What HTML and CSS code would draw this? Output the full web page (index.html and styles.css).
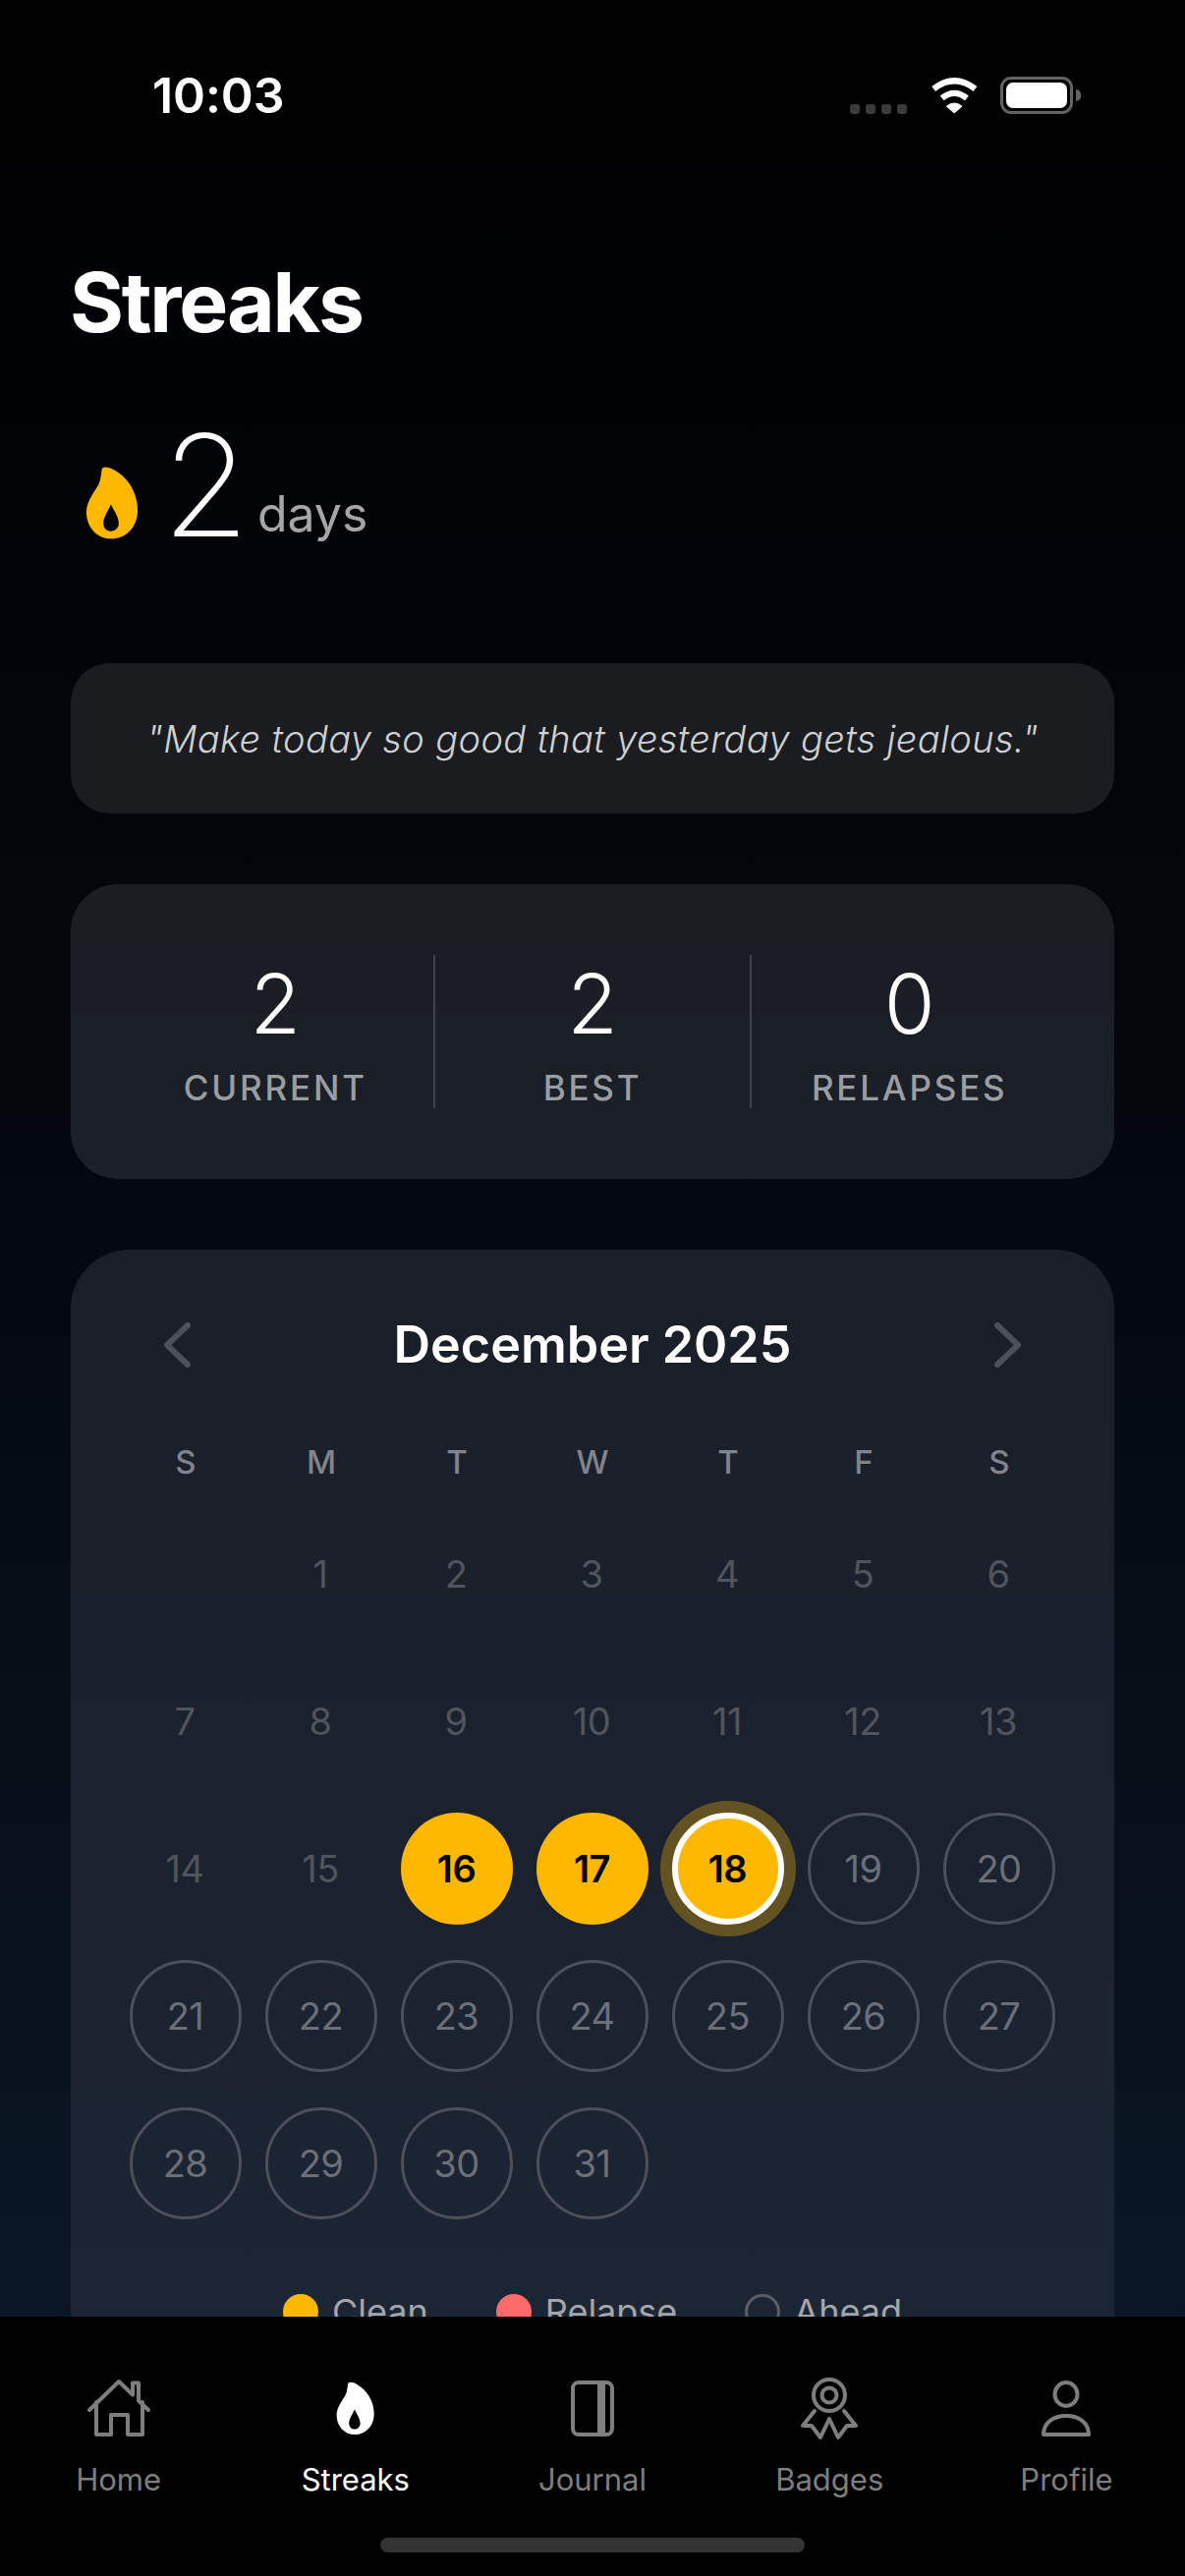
FILE: index.html
```html
<!DOCTYPE html>
<html lang="en">
<head>
<meta charset="utf-8">
<title>Streaks</title>
<link rel="stylesheet" href="styles.css">
</head>
<body>
<svg class="defs" width="0" height="0" aria-hidden="true">
  <symbol id="flame" viewBox="80 100 170 235">
    <path fill="currentColor" fill-rule="evenodd" d="M133 112 C140 104 155 108 170 116 C215 140 242 190 242 240 C242 292 205 327 162 327 C118 327 85 292 85 245 C85 215 105 190 120 165 C130 148 130 125 133 112 Z M160 222 C172 245 184 262 184 280 C184 294 173 304 160 304 C147 304 137 294 137 280 C137 262 150 245 160 222 Z"/>
  </symbol>
</svg>
<div class="screen">
  <header class="status">
    <span class="time">10:03</span>
    <span class="island"></span>
    <span class="signal"><i></i><i></i><i></i><i></i></span>
    <svg class="wifi" viewBox="312 84 160 116">
      <path class="wifi-arc" d="M327 122 Q391 72 456 122"/>
      <path class="wifi-arc" d="M353 151 Q391 120 430 151"/>
      <path class="wifi-dot" d="M391 197 L367 176 Q391 157 415 176 Z"/>
    </svg>
    <span class="battery"><span class="battery-fill"></span></span>
    <span class="battery-nub"></span>
  </header>

  <main class="content">
    <h1 class="title">Streaks</h1>
    <div class="hero">
      <svg class="hero-flame"><use href="#flame"/></svg>
      <span class="hero-num">2</span>
      <span class="hero-unit">days</span>
    </div>

    <section class="card quote">"Make today so good that yesterday gets jealous."</section>

    <section class="card stats">
      <div class="stat"><div class="stat-num">2</div><div class="stat-label">CURRENT</div></div>
      <div class="stat"><div class="stat-num">2</div><div class="stat-label">BEST</div></div>
      <div class="stat"><div class="stat-num">0</div><div class="stat-label">RELAPSES</div></div>
    </section>

    <section class="card calendar">
      <div class="cal-head">
        <svg class="chev" viewBox="0 0 28 46"><path d="M25 3 L4 23 L25 43"/></svg>
        <span class="cal-title">December 2025</span>
        <svg class="chev" viewBox="0 0 28 46"><path d="M3 3 L24 23 L3 43"/></svg>
      </div>
      <div class="weekdays">
        <span>S</span><span>M</span><span>T</span><span>W</span><span>T</span><span>F</span><span>S</span>
      </div>
      <div class="days">
        <span class="day"></span>
        <span class="day past">1</span><span class="day past">2</span><span class="day past">3</span><span class="day past">4</span><span class="day past">5</span><span class="day past">6</span>
        <span class="day past">7</span><span class="day past">8</span><span class="day past">9</span><span class="day past">10</span><span class="day past">11</span><span class="day past">12</span><span class="day past">13</span>
        <span class="day past">14</span><span class="day past">15</span>
        <span class="day"><b class="disc clean">16</b></span>
        <span class="day"><b class="disc clean">17</b></span>
        <span class="day"><b class="disc clean today">18</b></span>
        <span class="day"><b class="disc ahead">19</b></span>
        <span class="day"><b class="disc ahead">20</b></span>
        <span class="day"><b class="disc ahead">21</b></span>
        <span class="day"><b class="disc ahead">22</b></span>
        <span class="day"><b class="disc ahead">23</b></span>
        <span class="day"><b class="disc ahead">24</b></span>
        <span class="day"><b class="disc ahead">25</b></span>
        <span class="day"><b class="disc ahead">26</b></span>
        <span class="day"><b class="disc ahead">27</b></span>
        <span class="day"><b class="disc ahead">28</b></span>
        <span class="day"><b class="disc ahead">29</b></span>
        <span class="day"><b class="disc ahead">30</b></span>
        <span class="day"><b class="disc ahead">31</b></span>
      </div>
      <div class="legend">
        <span class="legend-item"><i class="dot dot-clean"></i>Clean</span>
        <span class="legend-item"><i class="dot dot-relapse"></i>Relapse</span>
        <span class="legend-item"><i class="dot dot-ahead"></i>Ahead</span>
      </div>
    </section>
  </main>

  <nav class="tabbar">
    <div class="tabs">
      <div class="tab">
        <svg class="tab-icon line" viewBox="0 0 72 72">
          <path d="M6 37 L36 8 L50 21.5 V9.5 H56 V27.5 L66 37"/>
          <path d="M13 29 V62 H28 V42 H45 V62 H60 V29"/>
        </svg>
        <span>Home</span>
      </div>
      <div class="tab active">
        <svg class="tab-icon"><use href="#flame"/></svg>
        <span>Streaks</span>
      </div>
      <div class="tab">
        <svg class="tab-icon line" viewBox="0 0 72 72">
          <rect x="16" y="9" width="40" height="53" rx="6"/>
          <path class="band" d="M45 9 V62"/>
        </svg>
        <span>Journal</span>
      </div>
      <div class="tab">
        <svg class="tab-icon line" viewBox="0 0 72 72">
          <circle cx="36" cy="22" r="16"/>
          <circle cx="36" cy="22" r="7.5"/>
          <path d="M21 38 L9 53 L18 53 L27 65 L36 46 L45 65 L54 53 L63 53 L51 38"/>
        </svg>
        <span>Badges</span>
      </div>
      <div class="tab">
        <svg class="tab-icon line" viewBox="0 0 72 72">
          <ellipse cx="36" cy="21" rx="11.5" ry="12"/>
          <path d="M13 62 C13 50 23 43 36 43 C49 43 59 50 59 62 Z"/>
        </svg>
        <span>Profile</span>
      </div>
    </div>
    <div class="home-bar"></div>
  </nav>
</div>
</body>
</html>
```
FILE: styles.css
```css
* { box-sizing: border-box; }
html, body { margin: 0; padding: 0; background: #000; }
.defs { position: absolute; }
.screen {
  position: relative;
  width: 1206px;
  height: 2622px;
  overflow: hidden;
  color: #fff;
  font-family: Inter, "Liberation Sans", sans-serif;
  background: linear-gradient(180deg, #000 0%, #020409 25%, #04090f 50%, #0c1a2b 100%);
}

/* status bar */
.status {
  display: flex;
  align-items: center;
  height: 151px;
  padding: 42px 0 0 155px;
}
.time { width: 260px; font-size: 50px; font-weight: 600; line-height: 60px; letter-spacing: -0.1px; }
.island { width: 377px; height: 109px; border-radius: 55px; background: #000; margin-right: 73px; }
.signal { display: flex; gap: 6px; width: 80px; padding-top: 29px; }
.signal i { width: 10px; height: 10px; border-radius: 3px; background: #3a3a3c; }
.wifi { width: 53px; height: 38px; margin-right: 20px; }
.wifi-arc { fill: none; stroke: #fff; stroke-width: 19; }
.wifi-dot { fill: #fff; stroke: #fff; stroke-width: 3; stroke-linejoin: round; }
.battery {
  display: flex;
  width: 74px;
  height: 38px;
  padding: 3px;
  border: 3px solid #636366;
  border-radius: 11px;
}
.battery-fill { flex: 1; background: #fff; border-radius: 7px; }
.battery-nub { width: 5px; height: 12px; margin-left: 3px; background: #636366; border-radius: 0 5px 5px 0; }

/* heading */
.content { padding: 0 72px; }
.title { margin: 107px 0 0 -1px; font-size: 84px; font-weight: 700; line-height: 100px; letter-spacing: -2.2px; }
.hero { display: flex; align-items: baseline; margin-top: 64px; height: 144px; }
.hero-flame { align-self: flex-end; width: 57px; height: 78px; margin: 0 22px 15px 14px; color: #ffb800; }
.hero-num { font-size: 144px; font-weight: 200; line-height: 144px; }
.hero-unit { align-self: flex-end; margin: 0 0 13px 8px; font-size: 50px; font-weight: 400; line-height: 60px; color: #a6a6a9; }

/* cards */
.quote {
  display: flex;
  align-items: center;
  justify-content: center;
  height: 153px;
  margin-top: 109px;
  border-radius: 40px;
  background: #1a1c20;
  font-size: 38px;
  font-style: italic;
  font-weight: 350;
  letter-spacing: 0.36px;
  color: #cfd0d2;
}
.stats {
  display: flex;
  margin-top: 72px;
  padding: 72px 48px;
  border-radius: 48px;
  background: linear-gradient(180deg, #1a1d22, #1b1f28);
}
.stat { flex: 1; text-align: center; border-left: 2px solid #3f4248; }
.stat:first-child { border-left: 0; }
.stat-num { font-size: 84px; font-weight: 300; line-height: 100px; }
.stat-label { margin-top: 14px; font-size: 35px; font-weight: 500; line-height: 42px; letter-spacing: 2.8px; color: #9a9da2; }

/* calendar */
.calendar {
  margin-top: 72px;
  padding: 67px 48px 120px;
  border-radius: 60px;
  background: linear-gradient(180deg, #1a1e27, #1c2636);
}
.cal-head { display: flex; align-items: center; justify-content: space-between; height: 60px; padding: 0 46px; }
.cal-title { font-size: 52px; font-weight: 600; line-height: 60px; }
.chev { width: 28px; height: 46px; }
.chev path { fill: none; stroke: #4b505a; stroke-width: 6; stroke-linecap: round; stroke-linejoin: round; }
.weekdays, .days { display: grid; grid-template-columns: repeat(7, 138px); }
.weekdays { margin-top: 67px; height: 44px; font-size: 33px; font-weight: 500; line-height: 44px; color: #80848c; text-align: center; }
.days { margin-top: 17px; grid-auto-rows: 150px; }
.day { display: flex; align-items: center; justify-content: center; font-size: 38px; letter-spacing: -0.5px; }
.past { padding-right: 2px; color: #50545d; }
.disc {
  display: flex;
  align-items: center;
  justify-content: center;
  width: 114px;
  height: 114px;
  padding-right: 1px;
  border-radius: 50%;
  font-weight: 400;
}
.clean { background: #ffb800; color: #000; font-weight: 600; }
.today { border: 6px solid #fff; box-shadow: 0 0 0 12px #635222; }
.ahead { border: 3px solid #4b505a; color: #6b6f78; }

.legend { display: flex; justify-content: center; gap: 69px; margin-top: 58px; font-size: 36px; line-height: 36px; color: #a4a6ab; }
.legend-item { display: flex; align-items: center; gap: 14px; }
.dot { width: 36px; height: 36px; border-radius: 50%; }
.dot-clean { background: #ffb800; }
.dot-relapse { background: #ff6b6b; }
.dot-ahead { border: 3px solid #5a5e67; }

/* tab bar */
.tabbar {
  position: absolute;
  left: 0;
  right: 0;
  bottom: 0;
  height: 264px;
  padding-top: 58px;
  background: #000;
}
.tabs { display: flex; }
.tab {
  flex: 1;
  display: flex;
  flex-direction: column;
  align-items: center;
  font-size: 31px;
  line-height: 40px;
  color: #7e7e7e;
}
.tab.active { color: #fff; }
.tab span { margin-top: 16px; }
.tab-icon { display: block; width: 72px; height: 72px; color: #fff; padding: 7px 0 8px; }
.line { padding: 0; fill: none; stroke: #7e7e7e; stroke-width: 4; stroke-linejoin: round; stroke-linecap: round; }
.band { stroke-width: 8; stroke-linecap: butt; }
.home-bar { width: 432px; height: 15px; margin: 39px auto 0; border-radius: 8px; background: #343434; }
```
